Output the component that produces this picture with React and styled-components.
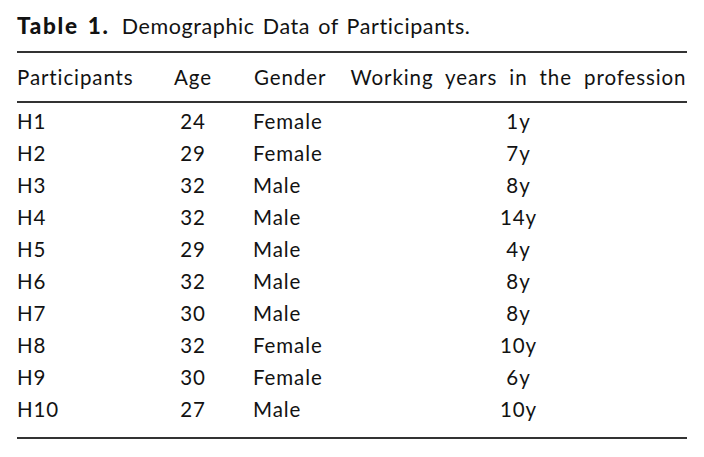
import React from 'react';
import styled, { createGlobalStyle } from 'styled-components';

const Global = createGlobalStyle`
  html, body {
    margin: 0;
    background: #fff;
  }
  body {
    font-family: Lato, "Open Sans", sans-serif;
    color: #121212;
  }
`;

const Wrap = styled.div`
  padding: 12px 0 0 17px;
  width: 670px;
`;

const Caption = styled.div`
  font-size: 21.5px;
  line-height: 28px;
  height: 39px;
  letter-spacing: 0.6px;
  word-spacing: 2px;
`;

const Label = styled.b`
  font-size: 22.5px;
  font-weight: 900;
  letter-spacing: 1.7px;
  margin-right: 12px;
`;

const Table = styled.table`
  width: 670px;
  border-collapse: collapse;
  table-layout: fixed;
  font-size: 20.5px;
  line-height: 32px;
  letter-spacing: 0.9px;
  word-spacing: 6px;
  border-top: 2px solid #333;
  border-bottom: 2px solid #333;
`;

const Head = styled.thead`
  border-bottom: 2px solid #333;
`;

const Th = styled.th`
  font-weight: 400;
  padding: 8px 0 8px;
  white-space: nowrap;
  text-align: ${(p) => p.$align || 'left'};
  padding-left: ${(p) => p.$indent || 0}px;
`;

const Td = styled.td`
  padding: 0;
  white-space: nowrap;
  text-align: ${(p) => p.$align || 'left'};
  padding-left: ${(p) => p.$indent || 0}px;
`;

const Body = styled.tbody`
  tr:first-child td {
    padding-top: 2px;
  }
  tr:last-child td {
    padding-bottom: 12px;
  }
`;

const rows = [
  ['H1', 24, 'Female', '1y'],
  ['H2', 29, 'Female', '7y'],
  ['H3', 32, 'Male', '8y'],
  ['H4', 32, 'Male', '14y'],
  ['H5', 29, 'Male', '4y'],
  ['H6', 32, 'Male', '8y'],
  ['H7', 30, 'Male', '8y'],
  ['H8', 32, 'Female', '10y'],
  ['H9', 30, 'Female', '6y'],
  ['H10', 27, 'Male', '10y'],
];

export default function App() {
  return (
    <>
      <Global />
      <Wrap>
        <Caption>
          <Label>Table 1.</Label>Demographic Data of Participants.
        </Caption>
        <Table>
          <colgroup>
            <col style={{ width: 146 }} />
            <col style={{ width: 60 }} />
            <col style={{ width: 127 }} />
            <col />
          </colgroup>
          <Head>
            <tr>
              <Th>Participants</Th>
              <Th $align="center">Age</Th>
              <Th $indent={31}>Gender</Th>
              <Th $align="center">Working years in the profession</Th>
            </tr>
          </Head>
          <Body>
            {rows.map(([id, age, gender, years]) => (
              <tr key={id}>
                <Td>{id}</Td>
                <Td $align="center">{age}</Td>
                <Td $indent={30}>{gender}</Td>
                <Td $align="center">{years}</Td>
              </tr>
            ))}
          </Body>
        </Table>
      </Wrap>
    </>
  );
}
